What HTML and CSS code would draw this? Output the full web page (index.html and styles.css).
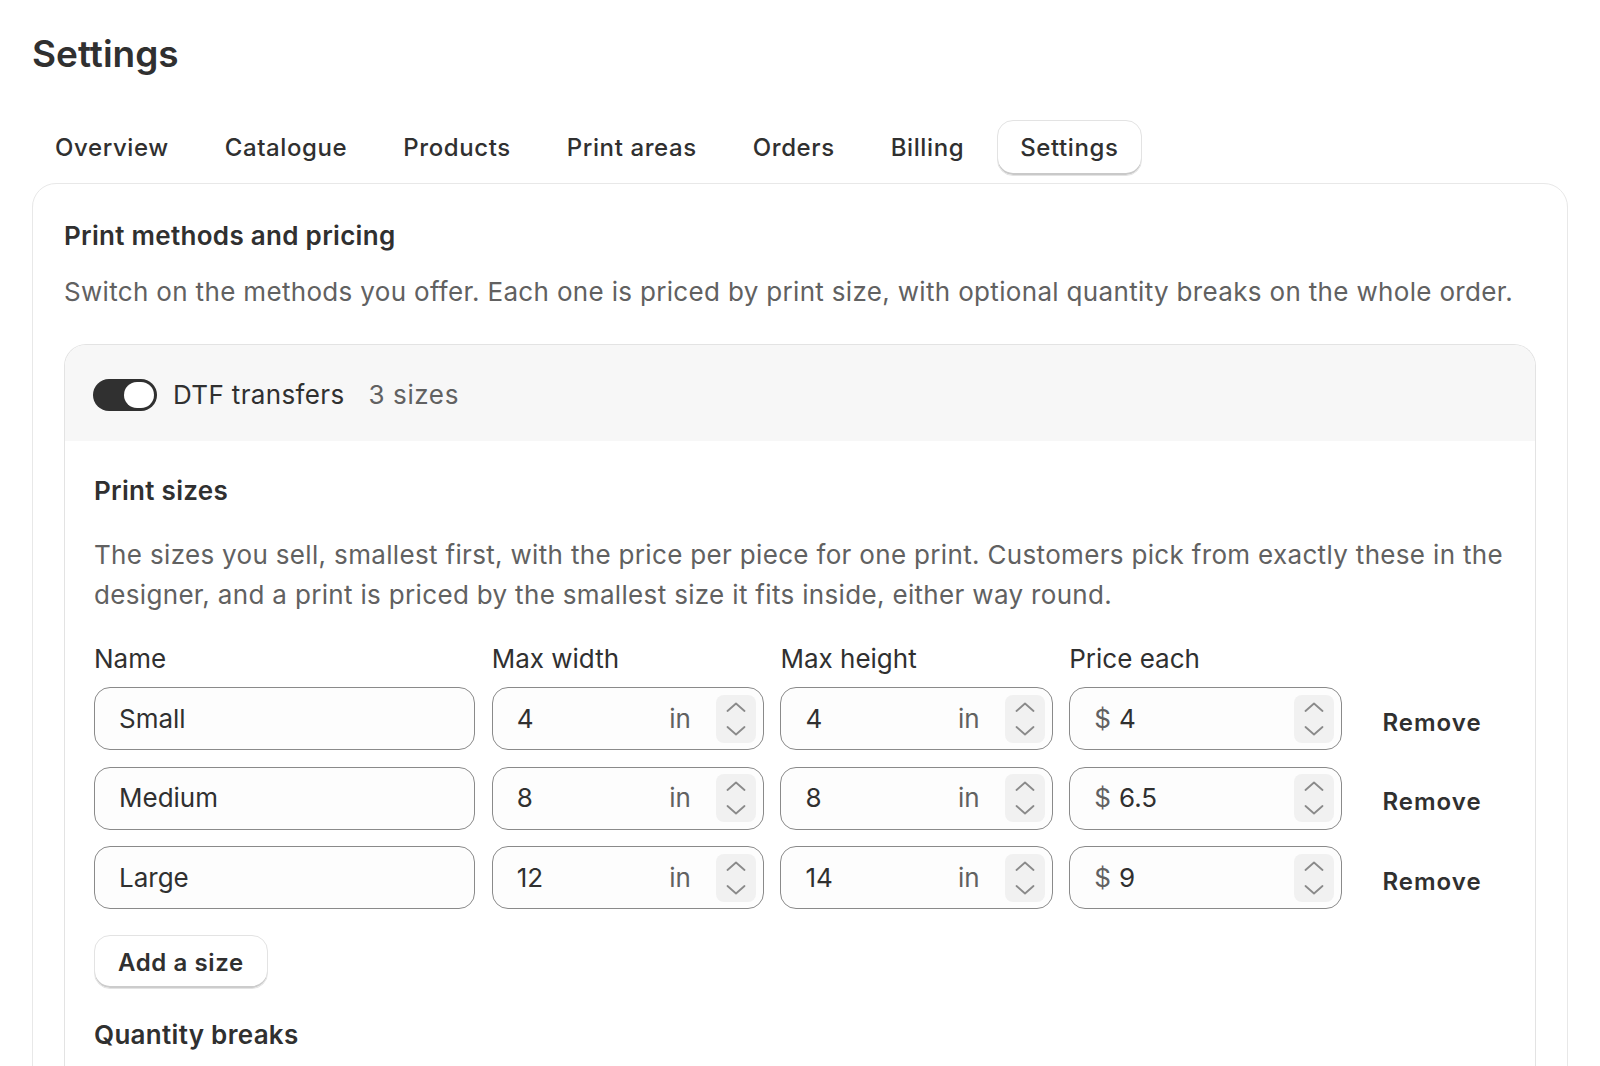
FILE: index.html
```html
<!DOCTYPE html>
<html lang="en">
<head>
<meta charset="utf-8">
<title>Settings</title>
<link rel="stylesheet" href="styles.css">
</head>
<body>
<div class="page">
  <h1 class="page-title">Settings</h1>
  <nav class="tabs">
    <button class="tab">Overview</button>
    <button class="tab">Catalogue</button>
    <button class="tab">Products</button>
    <button class="tab">Print areas</button>
    <button class="tab">Orders</button>
    <button class="tab">Billing</button>
    <button class="tab tab-active">Settings</button>
  </nav>

  <section class="card">
    <h2 class="card-title">Print methods and pricing</h2>
    <p class="muted card-desc">Switch on the methods you offer. Each one is priced by print size, with optional quantity breaks on the whole order.</p>

    <div class="method">
      <div class="method-head">
        <span class="toggle"><span class="knob"></span></span>
        <span class="method-name">DTF transfers</span>
        <span class="method-count">3 sizes</span>
      </div>
      <div class="method-body">
        <h3 class="sub-title">Print sizes</h3>
        <p class="muted sizes-desc">The sizes you sell, smallest first, with the price per piece for one print. Customers pick from exactly these in the designer, and a print is priced by the smallest size it fits inside, either way round.</p>

        <div class="size-row size-labels">
          <span class="label">Name</span>
          <span class="label">Max width</span>
          <span class="label">Max height</span>
          <span class="label">Price each</span>
        </div>

        <div class="size-rows">
          <div class="size-row">
            <div class="field"><span class="value">Small</span></div>
            <div class="field field-num"><span class="value">4</span><span class="suffix">in</span><span class="spinner"><svg viewBox="0 0 20 10" class="chev"><path d="M1.5 9 L10 1.5 L18.5 9"/></svg><svg viewBox="0 0 20 10" class="chev"><path d="M1.5 1 L10 8.5 L18.5 1"/></svg></span></div>
            <div class="field field-num"><span class="value">4</span><span class="suffix">in</span><span class="spinner"><svg viewBox="0 0 20 10" class="chev"><path d="M1.5 9 L10 1.5 L18.5 9"/></svg><svg viewBox="0 0 20 10" class="chev"><path d="M1.5 1 L10 8.5 L18.5 1"/></svg></span></div>
            <div class="field field-num"><span class="prefix">$</span><span class="value">4</span><span class="spinner"><svg viewBox="0 0 20 10" class="chev"><path d="M1.5 9 L10 1.5 L18.5 9"/></svg><svg viewBox="0 0 20 10" class="chev"><path d="M1.5 1 L10 8.5 L18.5 1"/></svg></span></div>
            <button class="btn-plain">Remove</button>
          </div>
          <div class="size-row">
            <div class="field"><span class="value">Medium</span></div>
            <div class="field field-num"><span class="value">8</span><span class="suffix">in</span><span class="spinner"><svg viewBox="0 0 20 10" class="chev"><path d="M1.5 9 L10 1.5 L18.5 9"/></svg><svg viewBox="0 0 20 10" class="chev"><path d="M1.5 1 L10 8.5 L18.5 1"/></svg></span></div>
            <div class="field field-num"><span class="value">8</span><span class="suffix">in</span><span class="spinner"><svg viewBox="0 0 20 10" class="chev"><path d="M1.5 9 L10 1.5 L18.5 9"/></svg><svg viewBox="0 0 20 10" class="chev"><path d="M1.5 1 L10 8.5 L18.5 1"/></svg></span></div>
            <div class="field field-num"><span class="prefix">$</span><span class="value">6.5</span><span class="spinner"><svg viewBox="0 0 20 10" class="chev"><path d="M1.5 9 L10 1.5 L18.5 9"/></svg><svg viewBox="0 0 20 10" class="chev"><path d="M1.5 1 L10 8.5 L18.5 1"/></svg></span></div>
            <button class="btn-plain">Remove</button>
          </div>
          <div class="size-row">
            <div class="field"><span class="value">Large</span></div>
            <div class="field field-num"><span class="value">12</span><span class="suffix">in</span><span class="spinner"><svg viewBox="0 0 20 10" class="chev"><path d="M1.5 9 L10 1.5 L18.5 9"/></svg><svg viewBox="0 0 20 10" class="chev"><path d="M1.5 1 L10 8.5 L18.5 1"/></svg></span></div>
            <div class="field field-num"><span class="value">14</span><span class="suffix">in</span><span class="spinner"><svg viewBox="0 0 20 10" class="chev"><path d="M1.5 9 L10 1.5 L18.5 9"/></svg><svg viewBox="0 0 20 10" class="chev"><path d="M1.5 1 L10 8.5 L18.5 1"/></svg></span></div>
            <div class="field field-num"><span class="prefix">$</span><span class="value">9</span><span class="spinner"><svg viewBox="0 0 20 10" class="chev"><path d="M1.5 9 L10 1.5 L18.5 9"/></svg><svg viewBox="0 0 20 10" class="chev"><path d="M1.5 1 L10 8.5 L18.5 1"/></svg></span></div>
            <button class="btn-plain">Remove</button>
          </div>
        </div>

        <button class="btn">Add a size</button>

        <h3 class="sub-title qb-title">Quantity breaks</h3>
      </div>
    </div>
  </section>
</div>
</body>
</html>
```

FILE: styles.css
```css
* { box-sizing: border-box; }

html, body {
  margin: 0;
  padding: 0;
  background: #ffffff;
}

body {
  font-family: Inter, "Noto Sans", "Liberation Sans", sans-serif;
  color: #303030;
  font-size: 26px;
  line-height: 40px;
}

.page {
  padding: 34px 32px 0;
}

.page-title {
  margin: 0;
  font-size: 37px;
  line-height: 40px;
  font-weight: 600;
  color: #303030;
}

.tabs {
  display: flex;
  gap: 10px;
  margin-top: 46px;
  margin-bottom: 7px;
}

.tab {
  font-family: inherit;
  font-size: 24px;
  font-weight: 500;
  letter-spacing: 0.6px;
  line-height: 32px;
  color: #303030;
  background: transparent;
  border: 1px solid transparent;
  border-radius: 16px;
  padding: 11px 22px;
  cursor: pointer;
}

.tab-active {
  background: #ffffff;
  border-color: #e3e3e3;
  box-shadow: inset 0 -2px 0 #c9c9c9;
}

.card {
  border: 1px solid #e8e8e8;
  border-radius: 24px;
  padding: 32px 31px 0;
  background: #ffffff;
  box-shadow: 0 1px 0 rgba(0, 0, 0, 0.04);
}

.card-title {
  margin: 0;
  font-size: 26px;
  line-height: 40px;
  font-weight: 600;
  letter-spacing: 0.3px;
}

.muted {
  color: #616161;
  margin: 0;
  letter-spacing: 0.33px;
}

.card-desc {
  margin-top: 16px;
}

.method {
  margin-top: 32px;
  border: 1px solid #e3e3e3;
  border-bottom: none;
  border-radius: 22px 22px 0 0;
  overflow: hidden;
}

.method-head {
  display: flex;
  align-items: center;
  height: 96px;
  padding: 3px 28px 0;
  background: #f7f7f7;
}

.toggle {
  position: relative;
  display: inline-block;
  width: 64px;
  height: 32px;
  border-radius: 16px;
  background: #303030;
  flex-shrink: 0;
}

.knob {
  position: absolute;
  top: 3px;
  right: 3px;
  width: 30px;
  height: 26px;
  border-radius: 13px;
  background: #ffffff;
}

.method-name {
  margin-left: 16px;
  letter-spacing: 0.35px;
}

.method-count {
  margin-left: 24px;
  color: #616161;
  letter-spacing: 0.6px;
}

.method-body {
  padding: 30px 29px 40px;
  background: #ffffff;
}

.sub-title {
  margin: 0;
  font-size: 26px;
  line-height: 40px;
  font-weight: 600;
  letter-spacing: 0.3px;
}

.sizes-desc {
  margin-top: 24px;
  margin-right: -6px;
}

.size-row {
  display: grid;
  grid-template-columns: 1.4fr 1fr 1fr 1fr 148px;
  column-gap: 16.5px;
  align-items: center;
}

.size-labels {
  margin-top: 24px;
  margin-bottom: 8px;
}

.label {
  font-size: 26px;
  line-height: 40px;
}

.size-rows {
  display: flex;
  flex-direction: column;
  gap: 16.5px;
}

.field {
  display: flex;
  align-items: center;
  height: 63px;
  border: 1px solid #8a8a8a;
  border-radius: 16px;
  background: #fdfdfd;
  padding: 0 24px;
  min-width: 0;
}

.field-num {
  padding-right: 7px;
}

.value {
  flex: 1;
  color: #303030;
}

.prefix {
  color: #616161;
  margin-right: 8px;
}

.suffix {
  color: #616161;
  margin-right: 25px;
}

.spinner {
  display: flex;
  flex-direction: column;
  align-items: center;
  justify-content: center;
  gap: 14px;
  width: 40px;
  height: 48px;
  border-radius: 8px;
  background: #f1f1f1;
}

.chev {
  width: 20px;
  height: 10px;
  fill: none;
  stroke: #8a8a8a;
  stroke-width: 1.8;
  stroke-linecap: round;
  stroke-linejoin: round;
}

.btn-plain {
  justify-self: center;
  font-family: inherit;
  font-size: 24px;
  font-weight: 600;
  letter-spacing: 1px;
  line-height: 32px;
  color: #303030;
  background: transparent;
  border: none;
  padding: 8px 0 0;
  cursor: pointer;
}

.btn {
  display: block;
  margin-top: 26px;
  height: 54px;
  padding: 0 23px;
  font-family: inherit;
  font-size: 24px;
  font-weight: 600;
  letter-spacing: 0.6px;
  color: #303030;
  background: #ffffff;
  border: 1px solid #e3e3e3;
  border-radius: 16px;
  box-shadow: inset 0 -2px 0 #cccccc;
  cursor: pointer;
}

.qb-title {
  margin-top: 26px;
}
```
